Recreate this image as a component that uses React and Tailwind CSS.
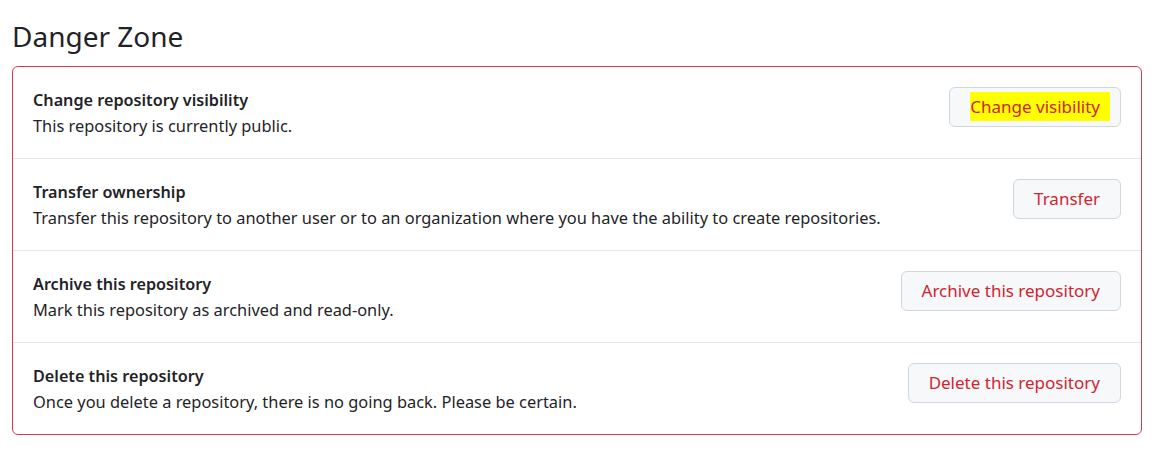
export default function App() {
    const rows = [
        {
            title: 'Change repository visibility',
            desc: 'This repository is currently public.',
            action: 'Change visibility',
            highlight: true,
        },
        {
            title: 'Transfer ownership',
            desc: 'Transfer this repository to another user or to an organization where you have the ability to create repositories.',
            action: 'Transfer',
        },
        {
            title: 'Archive this repository',
            desc: 'Mark this repository as archived and read-only.',
            action: 'Archive this repository',
        },
        {
            title: 'Delete this repository',
            desc: 'Once you delete a repository, there is no going back. Please be certain.',
            action: 'Delete this repository',
        },
    ]

    return (
        <div className="min-h-screen bg-white px-3 pt-[14px] text-[#1f2328] font-['Noto_Sans',sans-serif]">
            <h2 className="text-[28px] leading-[44px] font-normal mb-[8px] text-[#1f2328]">Danger Zone</h2>
            <div className="w-[1130px] rounded-md border border-[#d73a49]">
                {rows.map((row, i) => (
                    <div
                        key={row.title}
                        className={`flex items-start justify-between px-5 pt-5 pb-[19px] ${i > 0 ? 'border-t border-[#e5e7eb]' : ''}`}
                    >
                        <div className="leading-[26px] text-[16.4px]">
                            <div className="font-semibold text-[16.2px]">{row.title}</div>
                            <div>{row.desc}</div>
                        </div>
                        <button className="h-10 rounded-md border border-[#d0d7de] bg-[#f6f8fa] px-5 text-[17px] text-[#d1242f] shrink-0">
                            {row.highlight ? (
                                <span className="bg-[#ffff00] pr-[10px] -mr-[10px] py-[3px]">{row.action}</span>
                            ) : (
                                row.action
                            )}
                        </button>
                    </div>
                ))}
            </div>
        </div>
    )
}
